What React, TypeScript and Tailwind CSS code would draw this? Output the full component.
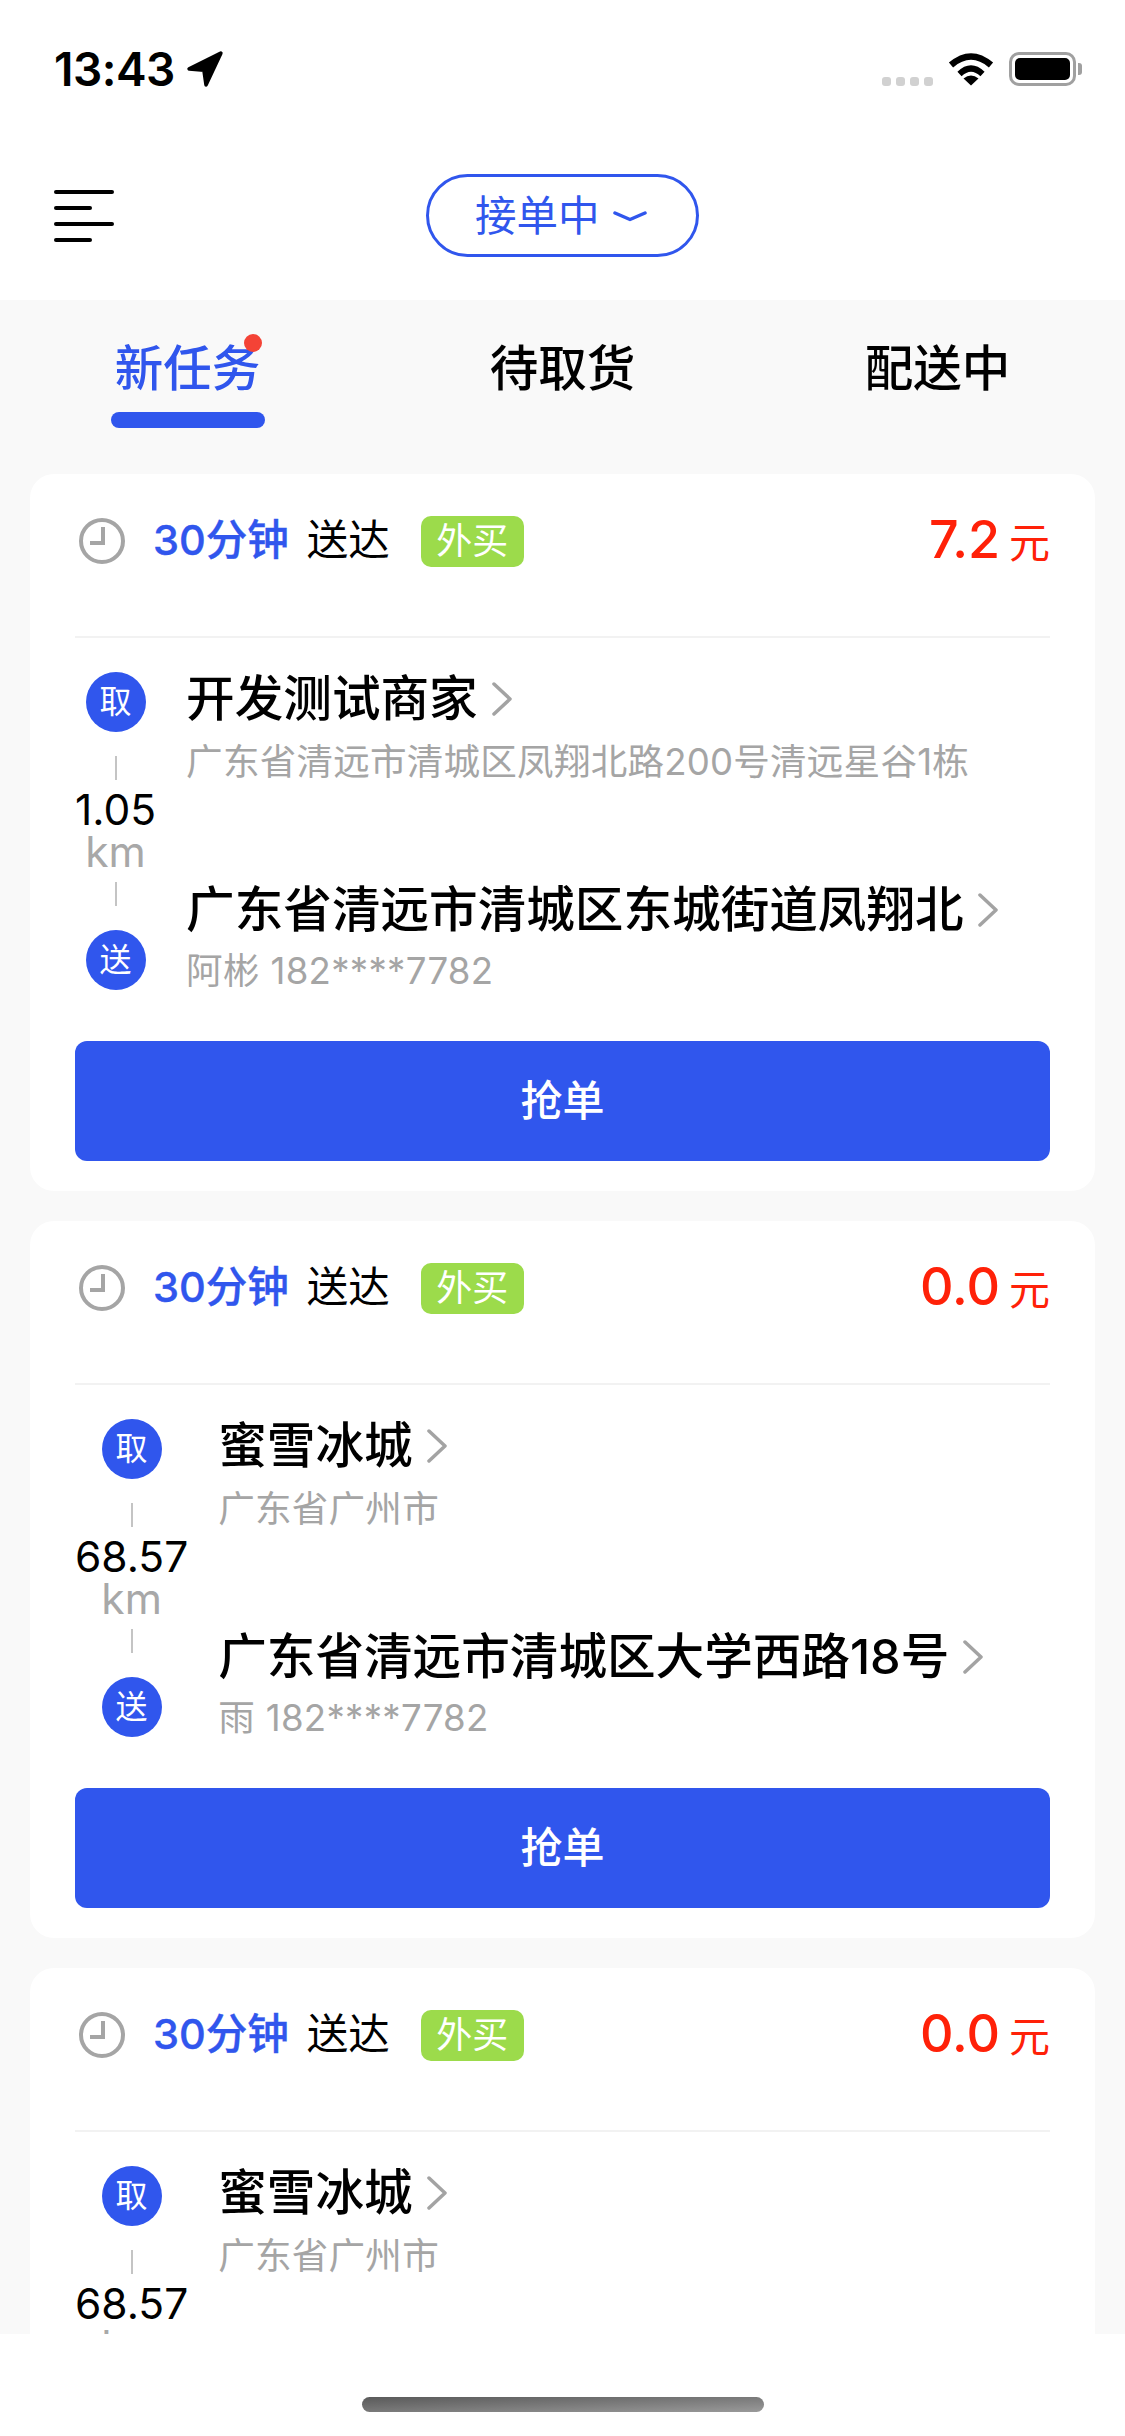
const orders = [
  {
    price: "7.2",
    shop: "开发测试商家",
    shopAddress: "广东省清远市清城区凤翔北路200号清远星谷1栋",
    distance: "1.05",
    dest: "广东省清远市清城区东城街道凤翔北",
    contact: "阿彬 182****7782",
  },
  {
    price: "0.0",
    shop: "蜜雪冰城",
    shopAddress: "广东省广州市",
    distance: "68.57",
    dest: "广东省清远市清城区大学西路18号",
    contact: "雨 182****7782",
  },
  {
    price: "0.0",
    shop: "蜜雪冰城",
    shopAddress: "广东省广州市",
    distance: "68.57",
    dest: "广东省清远市清城区大学西路18号",
    contact: "雨 182****7782",
  },
];

const tabs = ["新任务", "待取货", "配送中"];

const Chevron = () => (
  <svg width="20" height="34" viewBox="0 0 20 34" fill="none" className="ml-[14px] shrink-0">
    <path d="M2 2 L18 17 L2 32" stroke="#a3a3a3" strokeWidth="3.5" strokeLinecap="round" strokeLinejoin="round" />
  </svg>
);

const ClockIcon = () => (
  <svg width="46" height="46" viewBox="0 0 46 46" fill="none" className="ml-[4px] shrink-0">
    <circle cx="23" cy="23" r="21" stroke="#a5a5a5" strokeWidth="4" />
    <path d="M24 9 V25 H11" stroke="#a5a5a5" strokeWidth="4" />
  </svg>
);

const StatusBar = () => (
  <div className="h-[138px] pl-[54px] pr-[43px] flex items-center justify-between">
    <div className="flex items-center">
      <span className="text-[46px] leading-none font-semibold text-black tracking-[-0.5px]">13:43</span>
      <svg width="38" height="38" viewBox="0 0 36 36" className="ml-[11px]">
        <path d="M33 3 L3 18 L17 19 L19 33 Z" fill="#000" stroke="#000" strokeWidth="3.5" strokeLinejoin="round" />
      </svg>
    </div>
    <div className="flex items-center">
      <div className="flex gap-[5px] self-end mb-[-1px] mr-[15px] pb-[1px]">
        <div className="w-[9px] h-[9px] rounded-[3px] bg-[#d1d1d1]" />
        <div className="w-[9px] h-[9px] rounded-[3px] bg-[#d1d1d1]" />
        <div className="w-[9px] h-[9px] rounded-[3px] bg-[#d1d1d1]" />
        <div className="w-[9px] h-[9px] rounded-[3px] bg-[#d1d1d1]" />
      </div>
      <svg width="46" height="34" viewBox="0 0 46 34" fill="none" className="mr-[15px]">
        <path d="M3 13 Q23 -4 43 13" stroke="#000" strokeWidth="6.5" />
        <path d="M11.5 22 Q23 11 34.5 22" stroke="#000" strokeWidth="6" />
        <path d="M23 33.5 L15.5 26.5 Q23 20.5 30.5 26.5 Z" fill="#000" />
      </svg>
      <div className="w-[67px] h-[34px] rounded-[10px] border-[3px] border-[#a0a0a0] p-[3px]">
        <div className="w-full h-full rounded-[5px] bg-black" />
      </div>
      <div className="w-[4px] h-[12px] ml-[2px] rounded-r-[3px] bg-[#a0a0a0]" />
    </div>
  </div>
);

const NavBar = () => (
  <div className="relative h-[162px] pb-[7px] flex items-center justify-center">
    <div className="absolute left-[54px] top-[52px] w-[60px] flex flex-col gap-[12px]">
      <div className="w-[60px] h-[4px] rounded-full bg-black" />
      <div className="w-[38px] h-[4px] rounded-full bg-black" />
      <div className="w-[60px] h-[4px] rounded-full bg-black" />
      <div className="w-[38px] h-[4px] rounded-full bg-black" />
    </div>
    <div className="w-[273px] h-[83px] rounded-full border-[3px] border-[#3056ed] flex items-center pl-[46px]">
      <span className="text-[41.5px] leading-none text-[#3056ed] mt-[2px]">接单中</span>
      <svg width="34" height="11" viewBox="0 0 34 11" fill="none" className="ml-[13px] mt-[2px]">
        <path d="M2 2 L17 8.5 L32 2" stroke="#3056ed" strokeWidth="3.5" strokeLinecap="round" strokeLinejoin="round" />
      </svg>
    </div>
  </div>
);

const Tabs = () => (
  <div className="grid grid-cols-3 h-[174px] pt-[38px]">
    {tabs.map((tab, i) => (
      <div key={tab} className="flex flex-col items-center">
        <div className="relative">
          <span className={`block text-[48.5px] leading-[60px] pt-[1px] h-[60px] font-medium ${i === 0 ? "text-[#3056ed]" : "text-black"}`}>
            {tab}
          </span>
          {i === 0 && <div className="absolute -right-[2px] -top-[4px] w-[18px] h-[18px] rounded-full bg-[#f44336]" />}
        </div>
        {i === 0 && <div className="w-[154px] h-[16px] mt-[14px] rounded-full bg-[#3056ed]" />}
      </div>
    ))}
  </div>
);

type Order = (typeof orders)[number];

const OrderCard = ({ order }: { order: Order }) => (
  <div className="bg-white rounded-[24px] px-[45px] pb-[30px]">
    <div className="h-[134px] mb-[28px] flex items-center">
      <ClockIcon />
      <span className="ml-[28px] text-[41.5px] leading-none font-medium text-[#3056ed] [-webkit-text-stroke:0.4px_#3056ed]">30分钟</span>
      <span className="ml-[18px] text-[41.5px] leading-none text-black">送达</span>
      <span className="ml-[31px] w-[103px] h-[51px] rounded-[10px] bg-[#9cdb4b] text-white text-[36px] leading-[51px] text-center">外买</span>
      <div className="ml-auto flex items-baseline -mt-[2px]">
        <span className="text-[52px] leading-none font-medium text-[#ff2108]">{order.price}</span>
        <span className="ml-[9px] text-[41px] leading-none text-[#ff2108]">元</span>
      </div>
    </div>
    <div className="h-[2px] bg-[#f2f2f2]" />
    <div className="mt-[34px] h-[318px] flex items-start">
      <div className="flex flex-col items-center">
        <div className="w-[60px] h-[60px] rounded-full bg-[#3056ed] text-white text-[32px] leading-[60px] text-center">取</div>
        <div className="w-[2px] h-[24px] mt-[24px] bg-[#c4c4c4]" />
        <div className="mt-[9px] text-[42.5px] leading-[42px] text-black">{order.distance}</div>
        <div className="text-[42.5px] leading-[42px] text-[#a8a8a8]">km</div>
        <div className="w-[2px] h-[24px] mt-[9px] bg-[#c4c4c4]" />
        <div className="w-[60px] h-[60px] mt-[24px] rounded-full bg-[#3056ed] text-white text-[32px] leading-[60px] text-center">送</div>
      </div>
      <div className="ml-[30px] -mt-[3px] min-w-0">
        <div className="flex items-center h-[60px]">
          <span className="text-[48.6px] leading-[60px] font-medium text-black whitespace-nowrap">{order.shop}</span>
          <Chevron />
        </div>
        <div className="mt-[11px] text-[36.6px] leading-[44px] tracking-[0.2px] text-[#a5a5a5] whitespace-nowrap">{order.shopAddress}</div>
        <div className="mt-[96px] flex items-center h-[60px]">
          <span className="text-[48.6px] leading-[60px] font-medium text-black whitespace-nowrap">{order.dest}</span>
          <Chevron />
        </div>
        <div className="mt-[9px] text-[36.6px] leading-[44px] tracking-[0.3px] text-[#a5a5a5] whitespace-nowrap">{order.contact}</div>
      </div>
    </div>
    <div className="mt-[51px] h-[120px] rounded-[12px] bg-[#3056ed] flex items-center justify-center">
      <span className="text-[42px] leading-none font-medium text-white">抢单</span>
    </div>
  </div>
);

export default function App() {
  return (
    <div className="w-[1125px] h-[2436px] flex flex-col overflow-hidden bg-white font-['Inter','Noto_Sans_CJK_SC',sans-serif]">
      <StatusBar />
      <NavBar />
      <div className="flex-1 min-h-0 overflow-hidden bg-[#f9f9f9]">
        <Tabs />
        <div className="flex flex-col gap-[30px] px-[30px]">
          {orders.map((order, i) => (
            <OrderCard key={i} order={order} />
          ))}
        </div>
      </div>
      <div className="h-[102px] shrink-0 bg-white flex justify-center pt-[63px]">
        <div className="w-[402px] h-[15px] rounded-full bg-gradient-to-br from-[#5a5a5a] to-[#9a9a9a]" />
      </div>
    </div>
  );
}
